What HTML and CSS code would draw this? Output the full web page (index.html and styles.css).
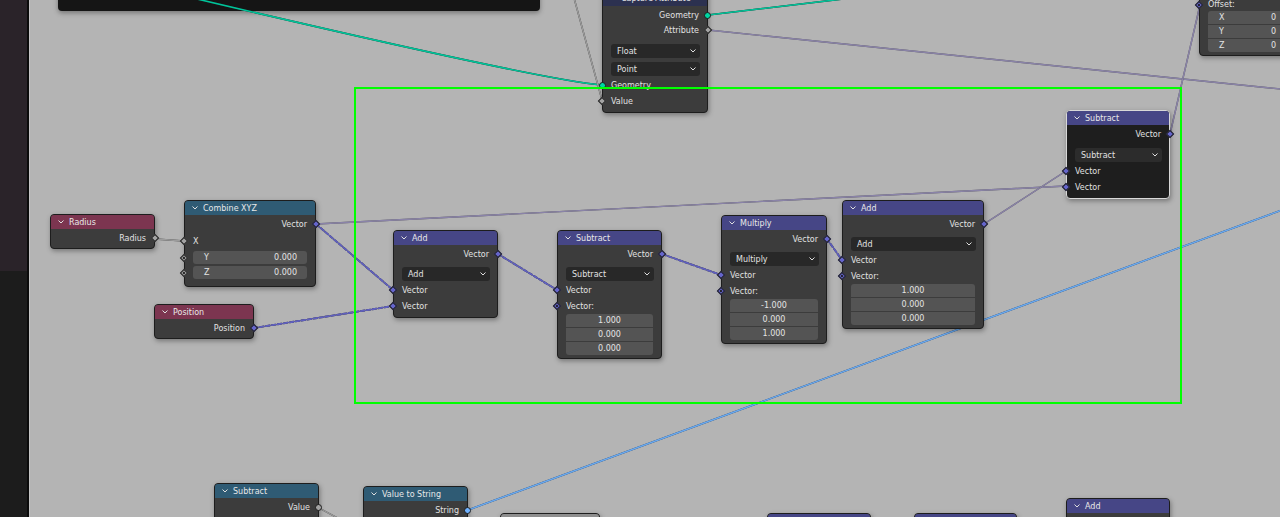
FILE: index.html
```html
<!DOCTYPE html>
<html>
<head>
<meta charset="utf-8">
<link rel="stylesheet" href="styles.css">
</head>
<body>
<div class="app">
  <aside class="side">
    <div class="side-top"></div>
    <div class="side-bot"></div>
  </aside>
  <main class="canvas">
    <div class="graph">
      <div class="blackbox" style="left:58px;top:-10px;width:482px;height:21px"></div>

      <svg class="links" width="1280" height="517" viewBox="0 0 1280 517">
        <g class="l-teal">
          <path d="M180,-5 Q540,80 602,85"/>
          <path d="M708,15 L860,-3"/>
        </g>
        <g class="l-grey">
          <path d="M574,-2 L602,100"/>
          <path d="M155,239 L184,241"/>
          <path d="M319,508 L345,522"/>
        </g>
        <g class="l-gp">
          <path d="M708,30 L1290,90"/>
          <path d="M316,224 L1066,186"/>
          <path d="M984,224 L1066,171"/>
          <path d="M1170,134 L1200,5"/>
        </g>
        <g class="l-blue">
          <path d="M468,510 L1290,207"/>
        </g>
        <g class="l-field">
          <path d="M316,224 L393,290"/>
          <path d="M254,328 L393,306"/>
          <path d="M498,254 L557,290"/>
          <path d="M662,254 L721,275"/>
          <path d="M827,239 L842,260"/>
        </g>
      </svg>

      <!-- Capture Attribute (cut off) -->
      <div class="node" style="left:602px;top:-10px;width:106px">
        <div class="hdr h-attr"><svg class="chev" viewBox="0 0 6 4"><path d="M0.5,0.5 L3,3 L5.5,0.5"/></svg>Capture Attribute</div>
        <div class="body">
          <div class="row out">Geometry<i class="sock r s-geo"></i></div>
          <div class="row out o2">Attribute<i class="sock r s-flt"></i></div>
          <div class="drop d-first">Float<svg class="dchev" viewBox="0 0 6 4"><path d="M0.5,0.5 L3,3 L5.5,0.5"/></svg></div>
          <div class="drop d-second">Point<svg class="dchev" viewBox="0 0 6 4"><path d="M0.5,0.5 L3,3 L5.5,0.5"/></svg></div>
          <div class="row in"><i class="sock l s-geo"></i>Geometry</div>
          <div class="row in"><i class="sock l s-flt"></i>Value</div>
        </div>
      </div>

      <!-- Offset node (cut off right) -->
      <div class="node" style="left:1199px;top:-19px;width:96px">
        <div class="hdr h-vec"></div>
        <div class="body">
          <div class="row in tight"><i class="sock l s-vecf"></i>Offset:</div>
          <div class="stack">
            <div class="field lf"><span>X</span><span>0</span></div>
            <div class="field lf"><span>Y</span><span>0</span></div>
            <div class="field lf"><span>Z</span><span>0</span></div>
          </div>
        </div>
      </div>

      <!-- Radius -->
      <div class="node" style="left:50px;top:214px;width:105px">
        <div class="hdr h-input"><svg class="chev" viewBox="0 0 6 4"><path d="M0.5,0.5 L3,3 L5.5,0.5"/></svg>Radius</div>
        <div class="body">
          <div class="row out">Radius<i class="sock r s-flt"></i></div>
        </div>
      </div>

      <!-- Combine XYZ -->
      <div class="node" style="left:184px;top:200px;width:132px">
        <div class="hdr h-conv"><svg class="chev" viewBox="0 0 6 4"><path d="M0.5,0.5 L3,3 L5.5,0.5"/></svg>Combine XYZ</div>
        <div class="body">
          <div class="row out">Vector<i class="sock r s-vec"></i></div>
          <div class="row in xrow"><i class="sock l s-flt"></i>X</div>
          <div class="field lf sep first"><i class="sock l s-fltf"></i><span>Y</span><span>0.000</span></div>
          <div class="field lf sep"><i class="sock l s-fltf"></i><span>Z</span><span>0.000</span></div>
        </div>
      </div>

      <!-- Position -->
      <div class="node" style="left:154px;top:304px;width:100px">
        <div class="hdr h-input"><svg class="chev" viewBox="0 0 6 4"><path d="M0.5,0.5 L3,3 L5.5,0.5"/></svg>Position</div>
        <div class="body">
          <div class="row out">Position<i class="sock r s-vec"></i></div>
        </div>
      </div>

      <!-- Add -->
      <div class="node" style="left:393px;top:230px;width:105px">
        <div class="hdr h-vec"><svg class="chev" viewBox="0 0 6 4"><path d="M0.5,0.5 L3,3 L5.5,0.5"/></svg>Add</div>
        <div class="body">
          <div class="row out">Vector<i class="sock r s-vec"></i></div>
          <div class="drop">Add<svg class="dchev" viewBox="0 0 6 4"><path d="M0.5,0.5 L3,3 L5.5,0.5"/></svg></div>
          <div class="row in"><i class="sock l s-vec"></i>Vector</div>
          <div class="row in"><i class="sock l s-vec"></i>Vector</div>
        </div>
      </div>

      <!-- Subtract -->
      <div class="node" style="left:557px;top:230px;width:105px">
        <div class="hdr h-vec"><svg class="chev" viewBox="0 0 6 4"><path d="M0.5,0.5 L3,3 L5.5,0.5"/></svg>Subtract</div>
        <div class="body">
          <div class="row out">Vector<i class="sock r s-vec"></i></div>
          <div class="drop">Subtract<svg class="dchev" viewBox="0 0 6 4"><path d="M0.5,0.5 L3,3 L5.5,0.5"/></svg></div>
          <div class="row in"><i class="sock l s-vec"></i>Vector</div>
          <div class="row in"><i class="sock l s-vecf"></i>Vector:</div>
          <div class="stack">
            <div class="field">1.000</div>
            <div class="field">0.000</div>
            <div class="field">0.000</div>
          </div>
        </div>
      </div>

      <!-- Multiply -->
      <div class="node" style="left:721px;top:215px;width:106px">
        <div class="hdr h-vec"><svg class="chev" viewBox="0 0 6 4"><path d="M0.5,0.5 L3,3 L5.5,0.5"/></svg>Multiply</div>
        <div class="body">
          <div class="row out">Vector<i class="sock r s-vec"></i></div>
          <div class="drop">Multiply<svg class="dchev" viewBox="0 0 6 4"><path d="M0.5,0.5 L3,3 L5.5,0.5"/></svg></div>
          <div class="row in"><i class="sock l s-vec"></i>Vector</div>
          <div class="row in"><i class="sock l s-vecf"></i>Vector:</div>
          <div class="stack">
            <div class="field">-1.000</div>
            <div class="field">0.000</div>
            <div class="field">1.000</div>
          </div>
        </div>
      </div>

      <!-- Add 2 -->
      <div class="node" style="left:842px;top:200px;width:142px">
        <div class="hdr h-vec"><svg class="chev" viewBox="0 0 6 4"><path d="M0.5,0.5 L3,3 L5.5,0.5"/></svg>Add</div>
        <div class="body">
          <div class="row out">Vector<i class="sock r s-vec"></i></div>
          <div class="drop">Add<svg class="dchev" viewBox="0 0 6 4"><path d="M0.5,0.5 L3,3 L5.5,0.5"/></svg></div>
          <div class="row in"><i class="sock l s-vec"></i>Vector</div>
          <div class="row in"><i class="sock l s-vecf"></i>Vector:</div>
          <div class="stack">
            <div class="field">1.000</div>
            <div class="field">0.000</div>
            <div class="field">0.000</div>
          </div>
        </div>
      </div>

      <!-- Subtract (active) -->
      <div class="node active" style="left:1066px;top:110px;width:104px">
        <div class="hdr h-vec"><svg class="chev" viewBox="0 0 6 4"><path d="M0.5,0.5 L3,3 L5.5,0.5"/></svg>Subtract</div>
        <div class="body">
          <div class="row out">Vector<i class="sock r s-vec"></i></div>
          <div class="drop">Subtract<svg class="dchev" viewBox="0 0 6 4"><path d="M0.5,0.5 L3,3 L5.5,0.5"/></svg></div>
          <div class="row in"><i class="sock l s-vec"></i>Vector</div>
          <div class="row in"><i class="sock l s-vec"></i>Vector</div>
        </div>
      </div>

      <!-- bottom row -->
      <div class="node" style="left:214px;top:483px;width:105px">
        <div class="hdr h-conv"><svg class="chev" viewBox="0 0 6 4"><path d="M0.5,0.5 L3,3 L5.5,0.5"/></svg>Subtract</div>
        <div class="body">
          <div class="row out">Value<i class="sock r s-fltc"></i></div>
          <div class="row out"></div>
        </div>
      </div>
      <div class="node" style="left:363px;top:486px;width:105px">
        <div class="hdr h-conv"><svg class="chev" viewBox="0 0 6 4"><path d="M0.5,0.5 L3,3 L5.5,0.5"/></svg>Value to String</div>
        <div class="body">
          <div class="row out">String<i class="sock r s-str"></i></div>
          <div class="row out"></div>
        </div>
      </div>
      <div class="node" style="left:500px;top:513px;width:100px">
        <div class="hdr h-grey"></div>
        <div class="body"><div class="row out"></div></div>
      </div>
      <div class="node" style="left:767px;top:513px;width:104px">
        <div class="hdr h-vec"></div>
        <div class="body"><div class="row out"></div></div>
      </div>
      <div class="node" style="left:914px;top:513px;width:103px">
        <div class="hdr h-vec"></div>
        <div class="body"><div class="row out"></div></div>
      </div>
      <div class="node" style="left:1066px;top:498px;width:104px">
        <div class="hdr h-vec"><svg class="chev" viewBox="0 0 6 4"><path d="M0.5,0.5 L3,3 L5.5,0.5"/></svg>Add</div>
        <div class="body"><div class="row out"></div></div>
      </div>

      <div class="selbox" style="left:354px;top:87px;width:828px;height:317px"></div>
    </div>
  </main>
</div>
</body>
</html>
```

FILE: styles.css
```css
* { box-sizing: border-box; }
html, body { margin: 0; padding: 0; }
body {
  background: #b4b4b4;
  font-family: "DejaVu Sans", "Liberation Sans", sans-serif;
  font-size: 8px;
}
.app {
  display: flex;
  width: 1280px;
  height: 517px;
  overflow: hidden;
}
.side {
  width: 29px;
  display: flex;
  flex-direction: column;
  border-right: 2px solid #0b0b0b;
  flex: none;
}
.side-top { flex: 0 0 271px; background: #2a2329; }
.side-bot { flex: 1; background: #1c1c1c; }
.canvas {
  position: relative;
  flex: 1;
  background: #b4b4b4;
  border-left: 1px solid #c4c4c4;
}
.graph {
  position: absolute;
  left: -30px;
  top: 0;
  width: 1280px;
  height: 517px;
}
.blackbox {
  position: absolute;
  background: #151515;
  border-radius: 4px;
  box-shadow: 0 2px 5px rgba(0,0,0,.35);
  z-index: 0;
}
.links {
  position: absolute;
  left: 0;
  top: 0;
  z-index: 1;
  overflow: visible;
}
.links path { fill: none; stroke-linecap: round; }
.l-teal path { stroke: #00c49a; stroke-width: 1.6; filter: drop-shadow(0 0 0.6px #1a1a1a); }
.l-grey path { stroke: #9c9c9c; stroke-width: 1.4; filter: drop-shadow(0 0 0.6px #333); }
.l-gp path { stroke: #8a83a8; stroke-width: 1.4; filter: drop-shadow(0 0 0.5px #555); }
.l-blue path { stroke: #6aa9ef; stroke-width: 1.6; filter: drop-shadow(0 0 0.6px #1a2a40); }
.l-field path { stroke: #6060c0; stroke-width: 1.8; stroke-dasharray: 4 2; filter: drop-shadow(0 0 0.6px #333); }

.node {
  position: absolute;
  z-index: 2;
  background: #3c3c3c;
  border: 1px solid #1d1d1d;
  border-radius: 4px;
  box-shadow: 1px 2px 5px rgba(0,0,0,.35);
  color: #e2e2e2;
}
.node.active {
  background: #1e1e1e;
  border-color: #d8d8d8;
}
.hdr {
  height: 14px;
  display: flex;
  align-items: center;
  padding-left: 7px;
  border-radius: 3px 3px 0 0;
  color: #e8e8e8;
  white-space: nowrap;
  overflow: hidden;
}
.h-vec { background: #464686; }
.h-conv { background: #2f5b74; }
.h-input { background: #7c3550; }
.h-attr { background: #2c3150; height: 15px; }
.h-grey { background: #8e8e8e; }
.chev { width: 6px; height: 4px; margin-right: 5px; flex: none; }
.chev path, .dchev path { fill: none; stroke: #e0e0e0; stroke-width: 1; }
.body { padding: 2px 0 3px; display: flex; flex-direction: column; }
.row {
  position: relative;
  height: 16px;
  display: flex;
  align-items: center;
  padding: 0 8px;
  white-space: nowrap;
}
.row.out { height: 14px; justify-content: flex-end; }
.row.out.o2 { height: 16px; }
.row.tight { height: 13px; }
.row.xrow { margin-top: 2px; }
.drop {
  height: 14px;
  margin: 6px 7px 1px 8px;
  background: #282828;
  border-radius: 3px;
  display: flex;
  align-items: center;
  justify-content: space-between;
  padding: 0 4px 0 6px;
}
.node.active .drop { background: #2c2c2c; margin-top: 7px; }
.d-first { margin-top: 6px; margin-bottom: 4px; }
.d-second { margin-top: 0; }
.dchev { width: 6px; height: 4px; }
.stack {
  margin: 0 8px;
  display: flex;
  flex-direction: column;
  gap: 1px;
  border-radius: 3px;
  overflow: hidden;
}
.field {
  position: relative;
  height: 13px;
  background: #545454;
  display: flex;
  align-items: center;
  justify-content: center;
  color: #e4e4e4;
}
.field.lf { justify-content: space-between; padding: 0 10px 0 11px; }
.field.sep { margin: 0 8px; border-radius: 3px; overflow: visible; }
.field.sep.first { margin-top: 2px; margin-bottom: 2px; }
.field.sep + .field.sep { margin-bottom: 4px; }
.field.sep .sock.l { left: -12px; }

.sock {
  position: absolute;
  top: 50%;
  width: 6px;
  height: 6px;
  margin-top: -3px;
  border: 1px solid #1b1b1b;
}
.sock.l { left: -4px; }
.sock.r { right: -4px; }
.s-vec, .s-vecf { background: #6565cc; transform: rotate(45deg); }
.s-flt, .s-fltf { background: #a3a3a3; transform: rotate(45deg); }
.s-vecf::after, .s-fltf::after {
  content: "";
  position: absolute;
  left: 1px; top: 1px;
  width: 2px; height: 2px;
  background: #1b1b1b;
}
.s-geo { background: #00d6a3; border-radius: 50%; width: 7px; height: 7px; margin-top: -3.5px; }
.s-str { background: #70b2ff; border-radius: 50%; width: 7px; height: 7px; margin-top: -3.5px; }
.s-fltc { background: #a3a3a3; border-radius: 50%; width: 7px; height: 7px; margin-top: -3.5px; }

.selbox {
  position: absolute;
  z-index: 3;
  border: 2px solid #00ff00;
}
```
